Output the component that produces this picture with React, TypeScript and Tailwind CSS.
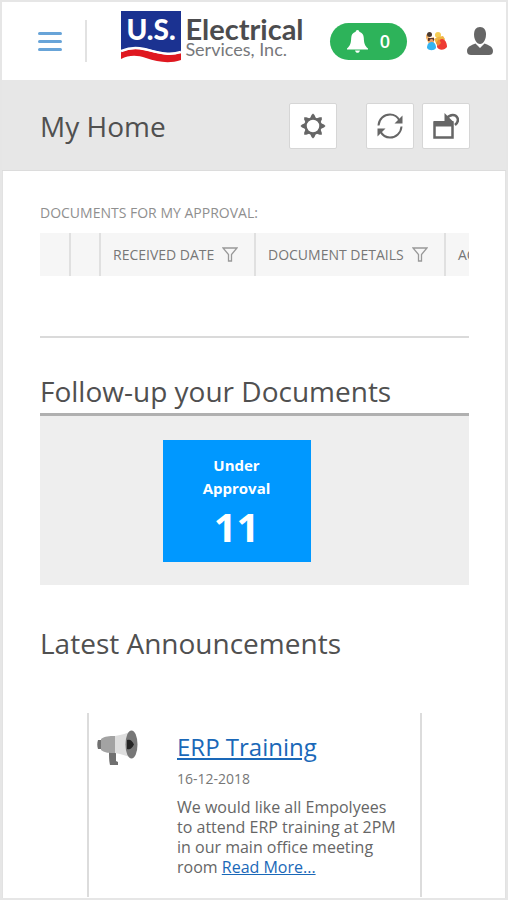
import type { ReactNode } from 'react';

interface IconButtonProps {
  label: string;
  children: ReactNode;
}

interface Column {
  title: string;
  width: string;
}

const columns: Column[] = [
  { title: '', width: 'w-[30px]' },
  { title: '', width: 'w-[30px]' },
  { title: 'RECEIVED DATE', width: 'w-[155px]' },
  { title: 'DOCUMENT DETAILS', width: 'w-[190px]' },
  { title: 'ACTION', width: 'w-[140px]' },
];

export default function App() {
  return (
    <div className="flex min-h-screen flex-col border-2 border-[#e6e6e6] bg-white font-['Open_Sans','Noto_Sans',sans-serif] text-[#505050]">
      <Header />
      <Toolbar />
      <main className="flex-1 overflow-hidden border-x border-[#e2e2e2] pt-8 pr-9 pl-[37px]">
        <Approvals />
        <FollowUp />
        <Announcements />
      </main>
    </div>
  );
}

function Header() {
  return (
    <header className="flex h-[78px] items-center justify-between pr-[13px] pl-9">
      <div className="flex items-center">
        <button type="button" aria-label="Menu" className="flex w-6 flex-col gap-[5px]">
          <span className="h-[3px] rounded-sm bg-[#68a4d8]" />
          <span className="h-[3px] rounded-sm bg-[#68a4d8]" />
          <span className="h-[3px] rounded-sm bg-[#68a4d8]" />
        </button>
        <span className="ml-[23px] h-[42px] w-0.5 bg-[#e2e2e2]" />
      </div>
      <Logo />
      <div className="flex items-center">
        <button
          type="button"
          aria-label="Notifications"
          className="flex h-[37px] w-[77px] items-center justify-center gap-3 rounded-full bg-[#2db35a] text-lg font-semibold text-white"
        >
          <BellIcon />
          <span>0</span>
        </button>
        <button type="button" aria-label="Community" className="ml-[18px]">
          <PeopleIcon />
        </button>
        <button type="button" aria-label="Profile" className="ml-5">
          <PersonIcon />
        </button>
      </div>
    </header>
  );
}

function Logo() {
  return (
    <a href="#home" className="ml-2 flex items-center gap-1 pb-2">
      <svg width="60" height="52" viewBox="0 0 60 52" aria-hidden="true">
        <path d="M0 0h60v42c-14 4-26-4-40-5-8 0-15 1-20 4z" fill="#1b3291" />
        <path d="M0 41c7-3 15-4 23-2 13 3 24 7 37 3v7c-12 4-23 2-35-2-9-3-17-3-25 1z" fill="#df1820" />
        <path d="M0 40c7-3 15-4 23-2 13 3 24 7 37 3" fill="none" stroke="#fff" strokeWidth="2.500" />
        <text x="30" y="29" textAnchor="middle" fill="#fff" fontFamily="Lato, sans-serif" fontSize="28" fontWeight="900">
          U.S.
        </text>
      </svg>
      <span className="flex flex-col font-['Lato',sans-serif]">
        <span className="text-[29px] leading-6 font-bold text-[#4c4c4e]">Electrical</span>
        <span className="text-lg leading-4 text-[#77787b]">Services, Inc.</span>
      </span>
    </a>
  );
}

function Toolbar() {
  return (
    <div className="flex h-[91px] items-center justify-between border-b border-[#dcdcdc] bg-[#e7e7e7] pt-0.5 pr-9 pl-[38px]">
      <h1 className="text-[28px] leading-9">My Home</h1>
      <div className="flex items-center gap-2">
        <div className="mr-[21px]">
          <IconButton label="Settings">
            <GearIcon />
          </IconButton>
        </div>
        <IconButton label="Refresh">
          <RefreshIcon />
        </IconButton>
        <IconButton label="Restore window">
          <RestoreIcon />
        </IconButton>
      </div>
    </div>
  );
}

function IconButton({ label, children }: IconButtonProps) {
  return (
    <button
      type="button"
      aria-label={label}
      className="flex h-[46px] w-12 items-center justify-center rounded-xs border border-[#d6d6d6] bg-white text-[#666]"
    >
      {children}
    </button>
  );
}

function Approvals() {
  return (
    <section className="border-b-2 border-[#dadada] pb-[60px]">
      <h2 className="mb-2.5 text-sm leading-5 text-[#8f8f8f]">DOCUMENTS FOR MY APPROVAL:</h2>
      <div className="overflow-hidden">
        <table className="w-[545px] table-fixed border-collapse bg-[#f6f6f6] text-sm text-[#777]">
          <thead>
            <tr>
              {columns.map((column, index) => (
                <th
                  key={index}
                  scope="col"
                  className={`h-[43px] border-r-2 border-[#e0e0e0] p-0 text-left font-normal ${column.width}`}
                >
                  {column.title && (
                    <span className="flex items-center gap-2 pl-3 whitespace-nowrap">
                      {column.title}
                      <FilterIcon />
                    </span>
                  )}
                </th>
              ))}
            </tr>
          </thead>
        </table>
      </div>
    </section>
  );
}

function FollowUp() {
  return (
    <section className="mt-[33px]">
      <h2 className="pb-0.5 text-[28px] leading-10 whitespace-nowrap">Follow-up your Documents</h2>
      <div className="flex h-[172px] justify-center border-t-[3px] border-[#b0b0b0] bg-[#eee] pt-6 pb-[23px]">
        <a
          href="#under-approval"
          className="mr-9 flex w-[148px] flex-col items-center bg-[#0098ff] pt-3.5 text-center font-bold text-white"
        >
          <span className="w-20 text-[15px] leading-[23px]">Under Approval</span>
          <span className="text-[40px] leading-[54px]">11</span>
        </a>
      </div>
    </section>
  );
}

function Announcements() {
  return (
    <section className="mt-[38px]">
      <h2 className="text-[28px] leading-10">Latest Announcements</h2>
      <article className="mt-[50px] mr-[47px] ml-[47px] flex h-[184px] border-x-2 border-[#dcdcdc] pt-4 pl-2">
        <MegaphoneIcon />
        <div className="ml-[39px] flex-1">
          <h3 className="text-2xl leading-9">
            <a href="#erp-training" className="text-[#1a68b8] underline">
              ERP Training
            </a>
          </h3>
          <time dateTime="2018-12-16" className="mt-1 block text-sm leading-5 text-[#777]">
            16-12-2018
          </time>
          <p className="mt-2 w-[226px] text-base leading-5 text-[#666]">
            We would like all Empolyees to attend ERP training at 2PM in our main office meeting room{' '}
            <a href="#read-more" className="text-[#1a68b8] underline">
              Read More...
            </a>
          </p>
        </div>
      </article>
    </section>
  );
}

function BellIcon() {
  return (
    <svg width="21" height="23" viewBox="0 0 21 23" fill="currentColor" aria-hidden="true">
      <path d="M10.500 0c1 0 1.800.8 1.800 1.800 3 .8 4.300 3.200 4.500 6.200.2 5 .8 7.500 4.200 10.500v1H0v-1C3.400 15.500 4 13 4.200 8c.2-3 1.500-5.400 4.500-6.200 0-1 .8-1.800 1.800-1.800z" />
      <path d="M8 20.500h5c-.5 1.500-1.400 2.300-2.500 2.300S8.500 22 8 20.500z" />
    </svg>
  );
}

function PeopleIcon() {
  return (
    <svg width="22" height="20" viewBox="0 0 22 20" aria-hidden="true">
      <path d="M1 3 5 7l4-1v7H4L1 7z" fill="#f5b56a" />
      <circle cx="4.500" cy="3.500" r="2.500" fill="#49372d" />
      <path d="M3 7h6v3H3z" fill="#5b3a32" />
      <circle cx="13" cy="4" r="3" fill="#f6cd54" />
      <path d="m9 8 4-2 5-1 2 3-3 6h-5z" fill="#efb443" />
      <circle cx="6.500" cy="10" r="2" fill="#e9a06b" />
      <path d="M2 17c0-4 2-6 5-6 2 0 4 2 4 6-2 3-7 3-9 0z" fill="#35b4f2" />
      <path d="M12 16c0-4 2-8 5-8s5 4 5 8c-2 3-8 4-10 0z" fill="#ee3b34" />
      <path d="m11 12 3-4 2 4-3 3z" fill="#f08a32" />
    </svg>
  );
}

function PersonIcon() {
  return (
    <svg width="26" height="28" viewBox="0 0 26 28" fill="#666" aria-hidden="true">
      <path d="M13 0c4 0 6 3 6 7.500S16.500 17 13 17 7 12 7 7.500 9 0 13 0z" />
      <path d="M8.500 16.500 13 21l4.500-4.500c3 1.500 8.500 2.500 8.500 7.500 0 3-2 4-4 4H4c-2 0-4-1-4-4 0-5 5.500-6 8.500-7.500z" />
    </svg>
  );
}

function GearIcon() {
  return (
    <svg width="26" height="26" viewBox="0 0 26 26" fill="none" aria-hidden="true">
      <circle cx="13" cy="13" r="7.500" stroke="currentColor" strokeWidth="2.500" />
      <g fill="currentColor">
        {[0, 45, 90, 135, 180, 225, 270, 315].map((angle) => (
          <path key={angle} d="m10 5.500 1.500-3.500L13 .5 14.500 2 16 5.500z" transform={`rotate(${angle} 13 13)`} />
        ))}
      </g>
    </svg>
  );
}

function RefreshIcon() {
  return (
    <svg width="26" height="26" viewBox="0 0 26 26" fill="none" stroke="currentColor" strokeWidth="2" aria-hidden="true">
      <path d="M1.500 12.500C2 6 7 1.500 13 1.500c4 0 7.500 2 9.500 6M24.500 13.500C24 20 19 24.500 13 24.500c-4 0-7.500-2-9.500-6" />
      <path d="M25.500 2.500v8h-8zM.5 23.500v-8h8z" fill="currentColor" stroke="none" />
    </svg>
  );
}

function RestoreIcon() {
  return (
    <svg width="26" height="26" viewBox="0 0 26 26" fill="none" stroke="currentColor" aria-hidden="true">
      <path d="M1.500 9.500h18v15h-18z" strokeWidth="2.500" />
      <path d="M1 8h19v5.500H1z" fill="currentColor" stroke="none" />
      <path d="M14 5c3-4 9-4 10.500 0 1 2.500 0 5-2.500 7" strokeWidth="2.500" />
      <path d="M11.500 0v8.500H20z" fill="currentColor" stroke="none" />
    </svg>
  );
}

function FilterIcon() {
  return (
    <svg width="16" height="15" viewBox="0 0 16 15" fill="none" stroke="#999" strokeWidth="1.300" aria-hidden="true">
      <path d="M1 1h14L9.500 7.500V14h-3V7.500z" />
    </svg>
  );
}

function MegaphoneIcon() {
  return (
    <svg width="41" height="37" viewBox="0 0 41 37" className="mt-px shrink-0" aria-hidden="true">
      <path d="M12 21h7v10l2 1v3h-8c-1-4-1-9-1-14z" fill="#707070" />
      <path d="M1 10h4v9H1c-1-3-1-6 0-9z" fill="#707070" />
      <path d="M4 9c4-3 8-3 14-3v17c-6 0-10 0-14-3z" fill="#a3a3a3" />
      <path d="M18 6C25 5 30 3 35 1v27c-5-2-10-4-17-5z" fill="#dedede" />
      <ellipse cx="34.500" cy="14.500" rx="6" ry="14" fill="#777" />
      <path d="M30 10c3-1 5 0 7 4.500-2 4-4 5.500-7 4.500z" fill="#242424" />
    </svg>
  );
}
